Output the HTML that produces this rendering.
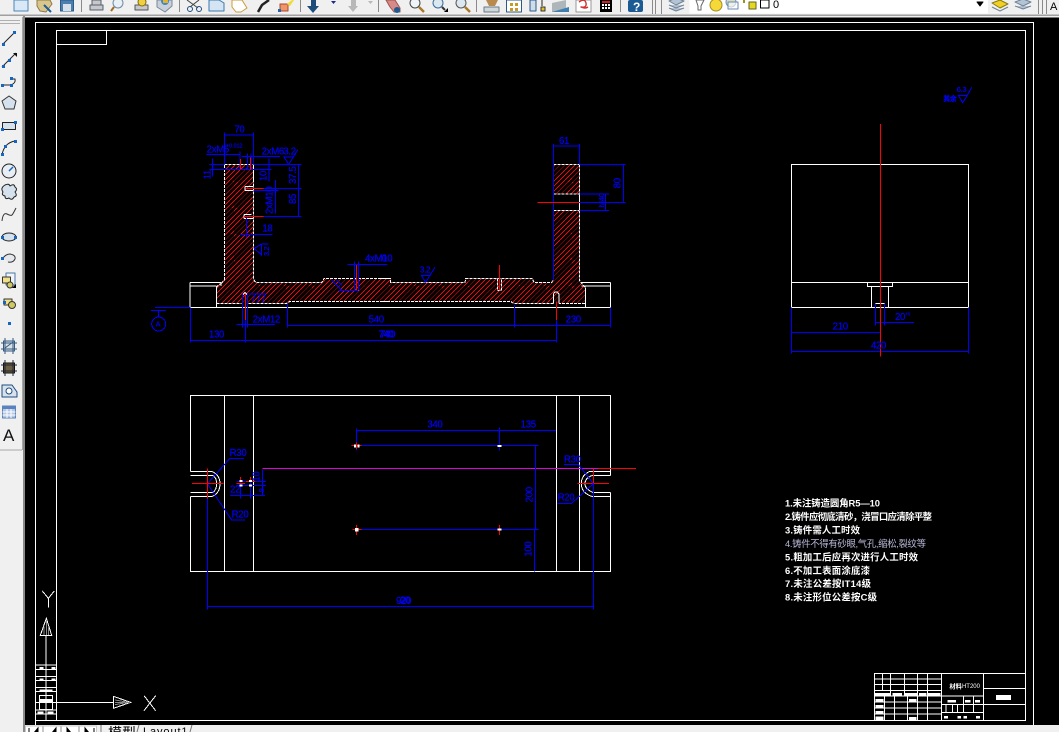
<!DOCTYPE html>
<html><head><meta charset="utf-8"><style>
html,body{margin:0;padding:0;background:#f0f0f0;width:1059px;height:732px;overflow:hidden}
svg{display:block;position:absolute;left:0;top:0}
.l{shape-rendering:crispEdges}
.l path,.l rect.o,.l circle{fill:none;stroke-width:3}
.b{stroke:#0000ff}.w{stroke:#fff}.r{stroke:#ff0000}.m{stroke:#e000e0}
.d{stroke:#fff;stroke-dasharray:9 3}
.l text{fill:#0000ff;font:29px "Liberation Sans",sans-serif;letter-spacing:-1px;stroke:#0000ff;stroke-width:.5px}
.n text{fill:#fff;font:bold 9.4px "Liberation Sans","Noto Sans CJK SC",sans-serif}
.i *{stroke-linejoin:round}
</style></head><body>
<svg width="1059" height="732" viewBox="0 0 1059 732" xmlns="http://www.w3.org/2000/svg">
<defs>
<pattern id="h" patternUnits="userSpaceOnUse" width="5" height="5"><path d="M-1 6L6 -1" stroke="#e01010" stroke-width="1.3" fill="none" shape-rendering="crispEdges"/></pattern>
<pattern id="k" patternUnits="userSpaceOnUse" width="26" height="26"><path d="M-2 28L28 -2" stroke="#000" stroke-width="6" stroke-opacity=".55" fill="none"/></pattern>
</defs>
<!-- chrome -->
<rect width="1059" height="732" fill="#f0f0f0"/>
<rect x="0" y="14.5" width="1059" height="1.5" fill="#a0a0a0"/>
<rect x="23" y="16" width="2" height="716" fill="#8a8a8a"/>
<rect x="22" y="17" width="1" height="433" fill="#a8a8a8"/>
<rect x="0" y="449.5" width="22" height="1" fill="#a8a8a8"/>
<rect x="0" y="20" width="20" height="1" fill="#b0b0b0"/><rect x="0" y="23" width="20" height="1" fill="#b0b0b0"/>
<!-- canvas -->
<rect x="25" y="17.5" width="1034" height="707.5" fill="#000"/>
<!-- frames -->
<g shape-rendering="crispEdges" fill="none" stroke="#fff" stroke-width="1">
<path d="M35.5 725V22.5H1033.5V725"/>
<path d="M56.5 720.5V30.5H1025.5V720.5H35.5"/>
<path d="M56.5 44.5H106.5V30.5"/>
</g>
<!-- section view hatch -->
<path d="M224.3 164.3H253.3V276.7L257.3 282.7H321.7L324 278.7H390.7V282.3H465L465.7 278.7H532.3L534 282.3H551.7L553.3 280V164.3H579.3V280L581.7 283.3L585.7 287.7V303.3H513.3L510.7 301.3H290L286.7 303.3H216.7V286.7L221 283.3L224.3 280Z" fill="url(#h)"/>
<path d="M224.3 164.3H253.3V276.7L257.3 282.7H321.7L324 278.7H390.7V282.3H465L465.7 278.7H532.3L534 282.3H551.7L553.3 280V164.3H579.3V280L581.7 283.3L585.7 287.7V303.3H513.3L510.7 301.3H290L286.7 303.3H216.7V286.7L221 283.3L224.3 280Z" fill="url(#k)"/>
<rect x="553.8" y="194" width="25" height="16.3" fill="#000"/>
<!-- group A -->
<g class="l" transform="translate(140 120) scale(.33333)">
<path class="d" d="M253 480V133H340V470Q342 488 352 488H545L552 476H750M243 490L253 480M230 550V500L243 490M230 550H305M325 550H440L450 544H750"/>
<path class="w" d="M340 133V180M150 562H750M150 487H243M150 498H230M150 487V562M230 498V562M243 487V498"/>
<path class="w" d="M308 550V525L315 518L322 525V550M312 283H335M312 295H340M312 283V295M315 199H340M315 212H340M315 199V212M318 205H340"/>
<path class="d" d="M643 476V512H655V476"/>
<path class="b" d="M253 38V133M340 38V133M253 45H340M200 103H300M300 95V150M305 109H420M323 100V150M333 100V150M340 133H485M208 133H253M208 149H395M217 115V170M387 115V185M340 205H485M340 212H415M340 289H485M475 133V289M407 180V280M300 343H398M320 292V352M343 385L365 372V405ZM385 372L365 372M432 111H460L446 133ZM460 111L473 90M622 433H742M643 425V510M655 425V510M595 512H655M575 480L605 510M590 480L605 495M290 613H405M308 520V622M322 520V622M316 600V668M325 522H380M345 525L338 545M360 525L352 548M375 525L367 548M33 572H78M56 572V591M45 562H150M152 562V668M152 661H750M442 550V622M442 616H750M152 655V668"/>
<circle class="b" cx="56" cy="612" r="21"/>
<path class="r" d="M301 117V148M331 113V150M318 205H370M312 289H370M649 435V510M317 525V600"/>
<text x="283" y="38">70</text>
<text x="200" y="97">2xM5</text><text x="258" y="82" style="font-size:16px;letter-spacing:0">+0.012</text>
<text x="365" y="104">2xM6</text>
<text x="430" y="104">3.2</text>
<text x="367" y="335">18</text>
<text x="675" y="425">4xM10</text>
<text x="338" y="607">2xM12</text>
<text x="207" y="652">130</text><text x="686" y="607">540</text><text x="715" y="652">740</text>
<text x="47" y="620" style="font-size:22px">A</text>
<text transform="translate(212 178) rotate(-90)">11</text>
<text transform="translate(380 183) rotate(-90)">10</text>
<text transform="translate(468 192) rotate(-90)">37.5</text>
<text transform="translate(468 252) rotate(-90)">85</text>
<text transform="translate(398 282) rotate(-90)">2xM10</text>
<text transform="translate(387 408) rotate(-90)" style="font-size:22px">3.2</text>
</g>
<!-- group B -->
<g class="l" transform="translate(380 120) scale(.33333)">
<path class="d" d="M0 476H32V487H255L257 476H457L462 487H515L520 480M520 133H598M520 222H598M520 271H598M598 271V480L605 490L617 503V550H537M520 550H400L392 544H0M598 133V222"/>
<path class="w" d="M598 222V271M0 562H691M605 487H691M605 498H691M691 487V562M617 503V562M520 550V522L525 516H532L537 522V550"/>
<path class="d" d="M352 476V512H364V476"/>
<path class="b" d="M520 72V480M598 72V133M520 78H598M598 133H737M598 222H687M598 247H737M598 271H687M677 222V271M730 133V247M0 616H691M0 661H529M403 555V622M691 562V622M529 600V668M0 433H20M124 466H150L137 487ZM150 466L165 442"/>
<path class="r" d="M472 247H598M358 435V512M529 545V600"/>
<text x="537" y="72">61</text><text x="557" y="607">230</text><text x="0" y="652">740</text><text x="5" y="425">0</text><text x="120" y="458" style="font-size:24px">3.2</text>
<text transform="translate(722 205) rotate(-90)">80</text>
<text transform="translate(672 262) rotate(-90)" style="font-size:23px">M40</text>
</g>
<!-- group C -->
<g class="l" transform="translate(770 80) scale(.33333)">
<path class="w" d="M64 683V253H596V683H64M64 607H596M292 607V620H368V607M304 620V683M356 620V683M317 683V670H343V683"/>
<path class="b" d="M64 683V820M596 683V820M64 814H596M64 757H331M317 670V737M344 670V737M317 727H432M565 46H592L578 68ZM592 46L605 22"/>
<path class="r" d="M331 132V830"/>
<text x="188" y="749">210</text><text x="303" y="806">420</text><text x="375" y="720">20</text>
<text x="405" y="706" style="font-size:14px;letter-spacing:0">+0</text>
<text x="560" y="36" style="font-size:23px">6.3</text>
<text x="520" y="63" style="font:bold 20px 'Noto Sans CJK SC',sans-serif;letter-spacing:0">其余</text>
</g>
<!-- group D -->
<g class="l" transform="translate(180 385) scale(.33333)">
<path class="w" d="M31 259V31H720M31 335V559H720M133 31V559M220 31V559M31 259H95M31 272H100M31 322H100M31 335H95M95 259Q120 270 120 296Q120 325 95 335M100 272Q110 280 110 296Q110 312 100 322"/>
<path class="m" d="M247 250H720"/>
<path class="b" d="M82 296V673M82 664H720M82 296L150 220H192M82 296L155 405H195M182 278V340M211 278V340M150 331H255M247 255V330M170 290H258M170 302H258M530 130V197M530 136H720M530 182H720M518 433H720"/>
<path class="r" d="M36 296H130M82 250V340M170 296H195M182 276V290M198 290H225M211 276V290M514 182H544M530 172V192M518 433H544M530 420V450"/>
<path class="w" d="M178 288H187M178 302H187M207 288H216M207 302H216M525 178V187M535 178V187M525 432H536M525 437H536" style="stroke-width:6"/>
<text x="149" y="213">R30</text><text x="155" y="398">R20</text><text x="150" y="322">22</text><text x="648" y="657">920</text>
<text transform="translate(238 290) rotate(-90)">10</text>
<text transform="translate(252 322) rotate(-90)" style="font-size:22px">9</text>
</g>
<!-- group E -->
<g class="l" transform="translate(400 385) scale(.33333)">
<path class="w" d="M0 31H632V272M0 559H632V322M469 31V559M538 31V559M632 259H570M632 272H575M632 322H578M632 335H578M570 259Q544 270 544 296Q544 325 578 335M575 272Q555 280 555 296Q555 312 578 322"/>
<path class="m" d="M0 250H595"/>
<path class="r" d="M595 250H708M532 296H627M580 250V340M298 420V450"/>
<path class="b" d="M580 296V673M0 664H580M0 136H468M298 127V197M0 182H416M0 433H416M407 182V433M403 433V559M492 238H535L580 296M473 355H515L580 296"/>
<path class="w" d="M292 183H304M292 433H304" style="stroke-width:6"/>
<text x="82" y="128">340</text><text x="362" y="128">135</text><text x="492" y="232">R30</text><text x="473" y="346">R20</text><text x="0" y="655">20</text>
<text transform="translate(398 352) rotate(-90)">200</text>
<text transform="translate(395 515) rotate(-90)">100</text>
</g>
<!-- notes -->
<g class="n">
<text x="785" y="506.5" textLength="95">1.未注铸造圆角R5—10</text>
<text x="785" y="520" textLength="147">2.铸件应彻底清砂，浇冒口应清除平整</text>
<text x="785" y="533.5" textLength="75">3.铸件需人工时效</text>
<text x="785" y="547" textLength="141" style="fill:#b8b8d8;font-weight:normal">4.铸件不得有砂眼,气孔,缩松,裂纹等</text>
<text x="785" y="560.5" textLength="133">5.粗加工后应再次进行人工时效</text>
<text x="785" y="574" textLength="85">6.不加工表面涂底漆</text>
<text x="785" y="587" textLength="86">7.未注公差按IT14级</text>
<text x="785" y="600.5" textLength="92">8.未注形位公差按C级</text>
</g>
<!-- title block -->
<g class="l" transform="translate(860 660) scale(.33333)">
<path class="w" d="M43 181V40H496V181M43 57H245M43 74H245M43 92H245M43 108H245M43 126H245M43 144H245M43 162H245M68 40V92M92 40V108M134 40V108M172 40V108M203 40V108M74 108V181M103 108V181M142 108V181M172 108V181M203 108V181M245 40V181M370 40V181M245 108H370M245 133H370M245 157H370M370 85H496M370 133H496M258 133V157M277 133V157M293 133V157M310 108V157M340 108V157"/>
<g fill="#fff"><rect x="43" y="99" width="49" height="9"/><rect x="98" y="99" width="28" height="9"/><rect x="134" y="99" width="38" height="9"/><rect x="177" y="99" width="23" height="9"/><rect x="204" y="99" width="37" height="9"/>
<rect x="46" y="117" width="24" height="10"/><rect x="47" y="135" width="23" height="9"/><rect x="46" y="153" width="24" height="9"/><rect x="46" y="169" width="24" height="11"/><rect x="147" y="117" width="22" height="10"/><rect x="147" y="171" width="22" height="9"/>
<rect x="408" y="105" width="45" height="15"/><rect x="262" y="120" width="26" height="8"/><rect x="315" y="120" width="16" height="8"/><rect x="345" y="120" width="15" height="8"/><rect x="252" y="168" width="12" height="8"/><rect x="293" y="168" width="10" height="8"/><rect x="310" y="168" width="11" height="8"/><rect x="348" y="168" width="12" height="8"/></g>
<text x="268" y="85" style="fill:#fff;stroke:none;font:bold 19px 'Noto Sans CJK SC',sans-serif;letter-spacing:0">材料</text>
<text x="306" y="84" style="fill:#fff;stroke:none;font-size:18px;letter-spacing:0">HT200</text>
</g>
<!-- UCS -->
<g class="l" transform="translate(0 580) scale(.33333)">
<path class="w" d="M127 33L145 55L163 33M145 55V83M139 115L121 166H155ZM138 166V367H340M340 349V385L392 367ZM432 347L467 392M467 347L432 392M107 255H170M107 268H170M107 290H170M107 302H170M107 322H170M107 335H170M107 390H170M107 402H170M138 255V420M118 346H158V388H118ZM107 367H170"/>
<path d="M139 120V165M132 140V165M146 140V165M345 367H390M345 360L385 367M345 374L385 367" stroke="#888"/>
<g fill="#fff"><rect x="118" y="261" width="12" height="7"/><rect x="155" y="261" width="11" height="7"/><rect x="118" y="295" width="12" height="7"/><rect x="155" y="295" width="11" height="7"/><rect x="118" y="328" width="40" height="7"/><rect x="118" y="357" width="40" height="10"/><rect x="113" y="394" width="18" height="7"/><rect x="142" y="394" width="18" height="7"/></g>
</g>
<!-- tabs -->
<rect x="25" y="725" width="1034" height="7" fill="#f0f0f0"/>
<g fill="#fff" stroke="#c8c8c8"><rect x="25.5" y="726" width="17" height="8"/><rect x="43.5" y="726" width="17" height="8"/><rect x="61.5" y="726" width="17" height="8"/><rect x="79.5" y="726" width="17" height="8"/></g>
<path d="M29 734V728M38 728L33 734H38ZM56 728L51 734H56ZM67 728L72 734H67ZM85 728L90 734H85ZM94 728V734" fill="#000" stroke="#000" stroke-width="1"/>
<path d="M101 732V725M137 732L139 725M190 732L192 725" stroke="#777" fill="none"/>
<text x="108" y="738" style="font:14px 'Noto Sans CJK SC',sans-serif" fill="#000">模型</text>
<text x="143" y="735" style="font:11px 'Liberation Sans',sans-serif;letter-spacing:.9px" fill="#000">Layout1</text>
<!-- top toolbar -->
<rect x="689.5" y="0" width="298.5" height="13.5" fill="#fff"/>
<g class="i" stroke-width="1">
<path d="M14 0H28V11H14Z" fill="#d8e8f6" stroke="#4c86b8"/>
<path d="M37 0H50L52 4L46 12L40 11L37 6Z" fill="#d8c68c" stroke="#8e7a48"/><path d="M44 5L51 12" stroke="#1d5a96" stroke-width="2"/>
<rect x="60.5" y="0" width="13" height="11" fill="#4a7fb0" stroke="#2a5a86"/><rect x="63" y="4" width="8" height="7" fill="#d5e0ea"/>
<path d="M90 5H103V10H90Z M92 0H101V5H92Z" fill="#c8c8cc" stroke="#55606a"/>
<circle cx="118" cy="3" r="5" fill="#e8eff5" stroke="#6a8aa5"/><path d="M114 7L111 11" stroke="#a66a22" stroke-width="2"/>
<path d="M135 5H148V10H135Z" fill="#c8c8cc" stroke="#555"/><circle cx="142" cy="2" r="4" fill="#f0d040" stroke="#806a10"/>
<path d="M157 0H172V6L165 12L157 7Z" fill="#c8d0dc" stroke="#7d8795"/><circle cx="165" cy="1" r="4" fill="#3a8ac4"/><path d="M163 0H168V3H163Z" fill="#e8b030"/>
<path d="M187 0L198 8M199 0L190 7" stroke="#444"/><circle cx="190" cy="9" r="2.5" fill="none" stroke="#1d4d80"/><circle cx="199" cy="9" r="2.5" fill="none" stroke="#1d4d80"/>
<path d="M209 0H219L224 3V11H209Z" fill="#d5e4f2" stroke="#3a78ae"/>
<path d="M232 0H242L247 8L241 12H236L232 7Z" fill="#fff" stroke="#cc9a38"/>
<path d="M258 12L262 5L269 0" stroke="#222" stroke-width="2.5" fill="none"/>
<rect x="280" y="4" width="8" height="7" fill="#f0946a" stroke="#a84a28"/><path d="M287 4L292 0H294L290 6Z" fill="#f2dc30"/><rect x="278" y="9" width="3" height="3" fill="#1f66b0"/>
<path d="M311 0H316V6H319L313 13L307 6H311Z" fill="#1e4c78"/>
<path d="M331 1H336L333.5 4Z" fill="#1a2a90"/>
<path d="M351 0H356V6H358L353 12L348 6H351Z" fill="#b8b8b8"/>
<path d="M368 1H373L370.5 4Z" fill="#b8b8b8"/>
<path d="M386 0H395L400 8V12H394L390 7Z" fill="#d88a88" stroke="#9a5550"/><circle cx="397" cy="10" r="3" fill="#1c5a90"/>
<circle cx="415" cy="3" r="5" fill="#eef4f8" stroke="#444"/><path d="M419 7L424 12" stroke="#a87828" stroke-width="2.4"/>
<circle cx="438" cy="3" r="5" fill="#dce8f0" stroke="#3a6a98"/><path d="M442 7L445 10" stroke="#333" stroke-width="2"/><path d="M444 12H448V8Z" fill="#000"/>
<circle cx="461" cy="3" r="5" fill="#dce8f0" stroke="#555"/><path d="M465 7L470 12" stroke="#a87828" stroke-width="2.4"/>
<path d="M484 7H499V12H484Z" fill="#cfd6dc" stroke="#6a7a85"/><path d="M486 0H498L495 6H489Z" fill="#b88a50"/>
<rect x="506.5" y="0" width="15" height="12" fill="#fff" stroke="#2a5a8a"/><rect x="510" y="3" width="3" height="3" fill="#c89a20"/><rect x="515" y="3" width="3" height="3" fill="#c89a20"/><rect x="510" y="8" width="3" height="3" fill="#c89a20"/><rect x="515" y="8" width="3" height="3" fill="#c89a20"/>
<rect x="530" y="0" width="6" height="11" fill="#cfdcea" stroke="#2a5a8a"/><path d="M542 0V6" stroke="#222"/><rect x="541" y="7" width="4" height="4" fill="#e0c020" stroke="#333"/>
<path d="M552 3L566 0V8L569 12H552Z" fill="#aeb6ba"/><path d="M552 12L569 7V12Z" fill="#3e7fb0"/>
<rect x="576" y="0" width="15" height="12" fill="#fff" stroke="#999"/><path d="M579 2Q585 -2 586 3T581 7Q585 9 588 7" stroke="#d03030" fill="none" stroke-width="1.4"/>
<rect x="600" y="0" width="12" height="12" fill="#000"/><g fill="#fff"><rect x="602" y="4" width="2" height="2"/><rect x="605" y="4" width="2" height="2"/><rect x="608" y="4" width="2" height="2"/><rect x="602" y="7" width="2" height="2"/><rect x="605" y="7" width="2" height="2"/><rect x="608" y="7" width="2" height="2"/></g><rect x="602" y="1" width="8" height="2" fill="#d02020"/>
<rect x="628" y="0" width="15" height="12" rx="2" fill="#1c5a94"/>
<path d="M669 1L676 -2L684 1L676 5ZM669 5L676 8L684 5M669 8L676 11L684 8" fill="#b4c4d4" stroke="#6e8296"/>
<path d="M696 0H704L701 6V10H698V6Z" fill="#fff" stroke="#666"/>
<circle cx="716" cy="5" r="6" fill="#f6d838" stroke="#a09020"/>
<circle cx="731" cy="2" r="5" fill="#d8dcc0" stroke="#7090b0"/><rect x="728" y="2" width="10" height="7" fill="#fff" fill-opacity=".6" stroke="#6a8ab0"/>
<rect x="749" y="2" width="7" height="7" fill="#e4d820" stroke="#666020"/><path d="M744 0V3" stroke="#a09020" stroke-width="2"/>
<rect x="760.5" y="0" width="8.5" height="8" fill="#fff" stroke="#000"/>
<path d="M977 2H983L980 6Z" fill="#000" stroke="#000"/>
<path d="M992 3L1000 0L1008 4L1000 8Z" fill="#f0d020" stroke="#8a7a10"/><path d="M992 7L1000 11L1008 7" fill="none" stroke="#6e8296"/>
<path d="M1015 2L1023 -1L1031 2L1023 6ZM1015 6L1023 9L1031 6" fill="#b4c4d4" stroke="#6e8296"/>
</g>
<text x="633" y="11" style="font:bold 12px 'Liberation Sans',sans-serif" fill="#fff">?</text>
<text x="773" y="8" style="font:11px 'Liberation Sans',sans-serif" fill="#000">0</text>
<g stroke="#8a8a8a" stroke-width="1"><path d="M81.5 0V12M179.5 0V12M300.5 0V12M378.5 0V12M476.5 0V12M620.5 0V12"/><path d="M652.5 0V14M655.5 0V14M661.5 0V14M1038.5 0V14M1042.5 0V14M1046.5 0V14"/></g>
<text x="1050" y="10" style="font:11px 'Liberation Sans',sans-serif" fill="#000">A</text>
<!-- left toolbar -->
<g class="i" stroke-width="1" fill="none">
<path d="M3 44L15 32" stroke="#222"/><rect x="2" y="43" width="3" height="3" fill="#1466c0"/><rect x="13" y="31" width="3" height="3" fill="#1466c0"/>
<path d="M2 67L16 53" stroke="#222"/><path d="M13 53H17V57Z" fill="#111"/><rect x="2" y="65" width="3" height="3" fill="#1466c0"/><rect x="8" y="59" width="3" height="3" fill="#1466c0"/>
<path d="M2 85H11Q16 83 15 79H11" stroke="#222"/><rect x="1" y="84" width="3" height="3" fill="#1466c0"/><rect x="10" y="84" width="3" height="3" fill="#1466c0"/><rect x="10" y="77" width="3" height="3" fill="#1466c0"/>
<path d="M9 96L16 101L14 109H5L2 101Z" fill="#d5e2ee" stroke="#333"/>
<rect x="2.5" y="122.5" width="13" height="7" fill="#d5e2ee" stroke="#222"/><rect x="1" y="128" width="3" height="3" fill="#1466c0"/><rect x="14" y="121" width="3" height="3" fill="#1466c0"/>
<path d="M2 155Q4 143 15 141" stroke="#222"/><rect x="1" y="153" width="3" height="3" fill="#1466c0"/><rect x="14" y="140" width="3" height="3" fill="#1466c0"/><rect x="4" y="145" width="3" height="3" fill="#1466c0"/>
<circle cx="9" cy="171" r="7" fill="#e8eef4" stroke="#222"/><path d="M9 171L13 167" stroke="#1466c0" stroke-width="1.5"/>
<path d="M5 185Q9 183 10 186Q14 183 15 187Q18 189 15 192Q18 196 14 197Q12 201 9 198Q5 200 5 196Q1 195 3 192Q0 188 5 185Z" fill="#d5e2ee" stroke="#222"/>
<path d="M2 221Q3 212 7 214T12 215T16 208" stroke="#333"/>
<ellipse cx="9" cy="237" rx="7" ry="4" fill="#d5e2ee" stroke="#222"/><rect x="1" y="236" width="3" height="3" fill="#1466c0"/><rect x="14" y="236" width="3" height="3" fill="#1466c0"/>
<path d="M3 258Q6 254 10 254Q16 255 15 259Q13 263 8 262" fill="#e4e8ec" stroke="#333"/><rect x="1" y="257" width="3" height="3" fill="#1466c0"/>
<rect x="6" y="273" width="9" height="12" fill="#f0f4f8" stroke="#4a78a8"/><rect x="2.5" y="277" width="8" height="6" fill="#f0e088" stroke="#333"/><circle cx="10" cy="285" r="3" fill="#d0c860" stroke="#333"/><path d="M12 288H16V284Z" fill="#000"/>
<rect x="4" y="299" width="8" height="6" fill="#f0e088" stroke="#333"/><circle cx="12" cy="305" r="3.5" fill="#d0c860" stroke="#333"/><rect x="3" y="301" width="3" height="3" fill="#1466c0"/>
<rect x="8" y="322" width="3" height="3" fill="#1466c0"/>
<rect x="3.5" y="341" width="11" height="10" fill="#d8e0e8" stroke="#355a80"/><path d="M1 343H17M1 349H17M5 338V354M13 338V354M5 348L13 342" stroke="#355a80"/>
<rect x="3.5" y="363" width="11" height="10" fill="#6a6040" stroke="#111"/><path d="M1 365H17M1 371H17M5 360V376M13 360V376" stroke="#223"/>
<path d="M2 385H12L17 392V397H2Z" fill="#d8e2ec" stroke="#1c4c80"/><circle cx="9" cy="391" r="3" fill="#fff" stroke="#1c4c80"/>
<rect x="2.5" y="406" width="13" height="12" fill="#b4c8e6" stroke="#5a82b4"/><rect x="2.5" y="406" width="13" height="3" fill="#5a82c0"/><path d="M2.5 412H15.5M2.5 415H15.5M7 409V418M11 409V418" stroke="#fff"/>
</g>
<text x="3" y="441" style="font:17px 'Liberation Sans',sans-serif" fill="#111">A</text>
</svg>
</body></html>
